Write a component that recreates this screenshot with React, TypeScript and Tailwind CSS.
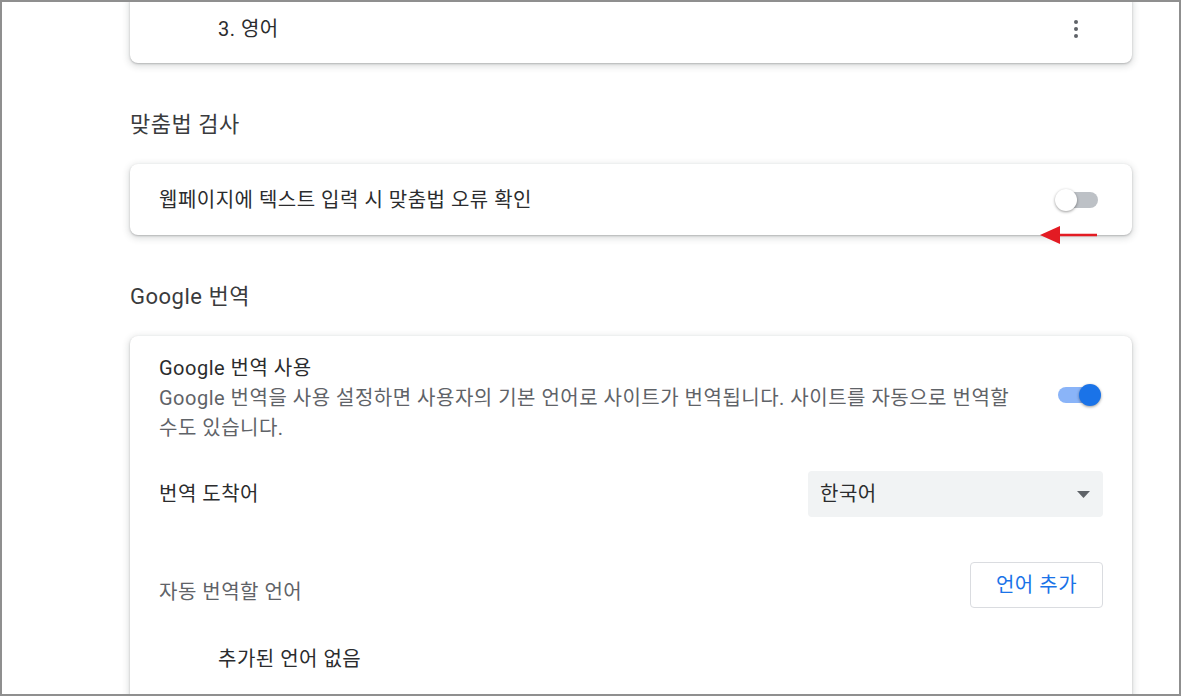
import React, { useState } from 'react';

const FONT = { fontFamily: 'Roboto, "Noto Sans CJK KR", sans-serif' };

function Toggle({ on, onChange }: { on: boolean; onChange: () => void }) {
  return (
    <button
      type="button"
      onClick={onChange}
      className="relative w-[46px] h-[24px] shrink-0"
    >
      <span
        className={
          'absolute left-[3px] right-[3px] top-[4px] h-[16px] rounded-full ' +
          (on ? 'bg-[#8ab4f8]' : 'bg-[#bdc1c6]')
        }
      />
      <span
        className={
          'absolute top-[1px] w-[22px] h-[22px] rounded-full shadow-[0_1px_3px_rgba(0,0,0,0.4)] ' +
          (on ? 'right-0 bg-[#1a73e8]' : 'left-0 bg-white')
        }
      />
    </button>
  );
}

const card =
  'w-[1002px] bg-white rounded-[8px] shadow-[0_1px_2px_0_rgba(60,64,67,0.3),0_2px_6px_2px_rgba(60,64,67,0.15)]';

export default function App() {
  const [spell, setSpell] = useState(false);
  const [translate, setTranslate] = useState(true);

  return (
    <div
      style={FONT}
      className="relative w-[1181px] h-[696px] overflow-hidden bg-white border-2 border-[#8f8f8f] text-[#2b2c2e] tracking-[0.5px]"
    >
      <div className="flex flex-col pl-[128px]">
        {/* 언어 목록 카드 (윗부분 잘림) */}
        <div className={card + ' -mt-[8px] h-[69px] flex items-center justify-between pl-[88px] pr-[46px]'}>
          <span className="text-[20px] leading-[30px]">3. 영어</span>
          <svg width="20" height="20" viewBox="0 0 20 20" className="text-[#5f6368]">
            <circle cx="10" cy="3" r="2" fill="currentColor" />
            <circle cx="10" cy="10" r="2" fill="currentColor" />
            <circle cx="10" cy="17" r="2" fill="currentColor" />
          </svg>
        </div>

        <h2 className="mt-[48px] text-[22px] leading-[28px] font-normal text-[#3a3b3d]">맞춤법 검사</h2>

        <div className={card + ' mt-[25px] h-[71px] flex items-center justify-between pl-[29px] pr-[31px]'}>
          <span className="text-[20px] leading-[30px]">웹페이지에 텍스트 입력 시 맞춤법 오류 확인</span>
          <Toggle on={spell} onChange={() => setSpell(!spell)} />
        </div>

        <h2 className="mt-[48px] text-[22px] leading-[28px] font-normal text-[#3a3b3d]">Google 번역</h2>

        <div className={card + ' mt-[25px] h-[420px] pt-[17px] pl-[29px] pr-[29px]'}>
          <div className="flex items-center justify-between">
            <div className="flex flex-col text-[20px] leading-[30px]">
              <span>Google 번역 사용</span>
              <span className="text-[#5f6368] whitespace-nowrap">
                Google 번역을 사용 설정하면 사용자의 기본 언어로 사이트가 번역됩니다. 사이트를 자동으로 번역할
              </span>
              <span className="text-[#5f6368]">수도 있습니다.</span>
            </div>
            <div className="mr-[2px]">
              <Toggle on={translate} onChange={() => setTranslate(!translate)} />
            </div>
          </div>

          <div className="mt-[28px] h-[46px] flex items-center justify-between">
            <span className="text-[20px] leading-[30px]">번역 도착어</span>
            <div className="w-[295px] h-[46px] bg-[#f1f3f4] rounded-[4px] flex items-center justify-between pl-[12px] pr-[13px]">
              <span className="text-[20px] leading-[30px]">한국어</span>
              <svg width="13" height="7" viewBox="0 0 13 7">
                <path d="M0 0 L13 0 L6.5 7 Z" fill="#5f6368" />
              </svg>
            </div>
          </div>

          <div className="mt-[45px] flex items-start justify-between">
            <span className="mt-[15px] text-[20px] leading-[30px] text-[#5f6368]">자동 번역할 언어</span>
            <button
              type="button"
              className="w-[133px] h-[46px] rounded-[4px] border border-[#dadce0] text-[#1a73e8] text-[20px] leading-[30px] tracking-[0.5px]"
            >
              언어 추가
            </button>
          </div>

          <div className="mt-[36px] pl-[59px] text-[20px] leading-[30px]">추가된 언어 없음</div>
        </div>
      </div>

      {/* 빨간 화살표 표시 */}
      <svg
        className="absolute left-[1036px] top-[221px]"
        width="62"
        height="24"
        viewBox="0 0 62 24"
      >
        <path d="M20 12 L59 12" stroke="#e31b23" strokeWidth="2.5" />
        <path d="M2 12 L22 3 L22 21 Z" fill="#e31b23" />
      </svg>
    </div>
  );
}
